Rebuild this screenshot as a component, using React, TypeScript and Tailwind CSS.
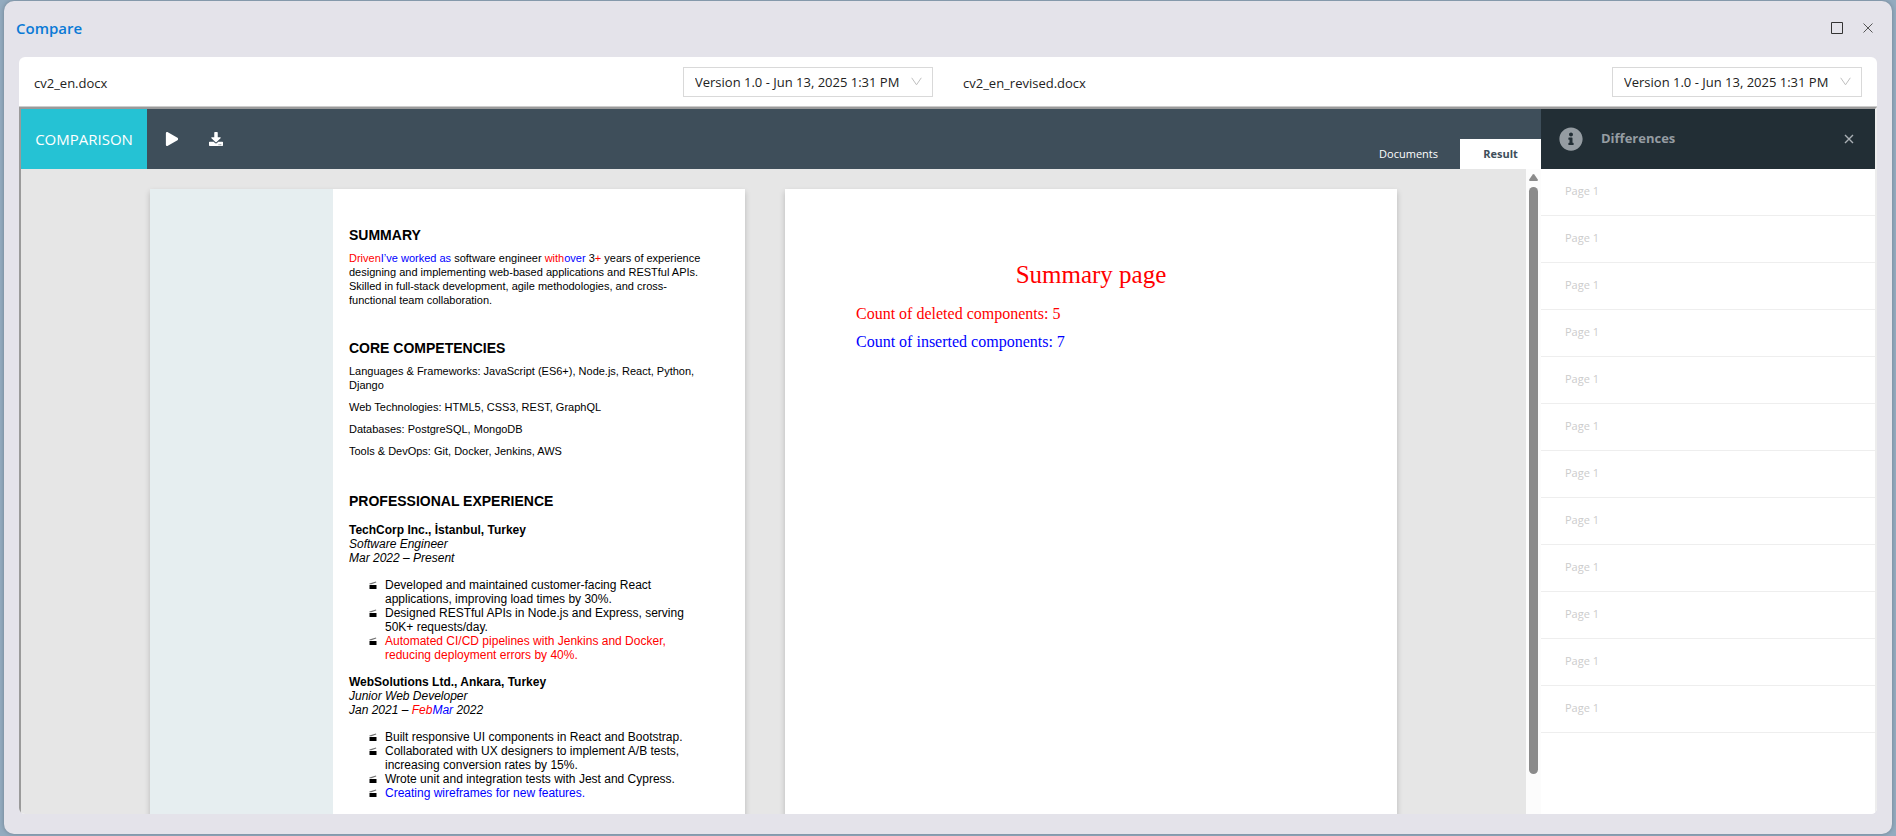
import { useState } from "react";
import type { ReactNode } from "react";
import { FaDownload, FaInfoCircle, FaPlay } from "react-icons/fa";

const VERSION = "Version 1.0 - Jun 13, 2025 1:31 PM";

const differences = Array.from({ length: 12 }, (_, i) => ({ id: i, page: 1 }));

function Del({ children }: { children: ReactNode }) {
  return <del className="no-underline text-[#ff0000]">{children}</del>;
}

function Ins({ children }: { children: ReactNode }) {
  return <ins className="no-underline text-[#0000ff]">{children}</ins>;
}

function FilePicker({ id, name }: { id: string; name: string }) {
  return (
    <div className="flex flex-1 items-center justify-between px-[15px]">
      <label htmlFor={id} className="pt-1">
        {name}
      </label>
      <div className="relative w-[250px]">
        <select
          id={id}
          className="block h-[30px] w-full appearance-none border border-[#d9d9d9] bg-white pl-[11px] pr-8 pt-[2px] outline-none"
        >
          <option>{VERSION}</option>
        </select>
        <svg
          className="pointer-events-none absolute right-[11px] top-[10px] h-[9px] w-[11px]"
          viewBox="0 0 11 9"
          fill="none"
          stroke="#bfbfbf"
        >
          <path d="M0.7 0.8 5.5 7.8 10.3 0.8" />
        </svg>
      </div>
    </div>
  );
}

function Bullet({ children }: { children: ReactNode }) {
  return (
    <li className="flex">
      <svg
        className="mr-2 mt-[3px] h-2 w-2 shrink-0"
        viewBox="0 0 8 8"
        fill="#000"
      >
        <path d="M0.5 4h7v4h-7z" />
        <path d="M0.3 2.6 7 0.4 7.3 1.5 2.4 3.2H0.5z" opacity="0.55" />
      </svg>
      <span>{children}</span>
    </li>
  );
}

function CvPage() {
  return (
    <article className="flex h-[842px] w-[595px] shrink-0 bg-white font-['Liberation_Sans',Arial,sans-serif] text-[12px] leading-[14px] text-black shadow-[0_3px_6px_rgba(0,0,0,0.2)]">
      <div className="w-[183px] shrink-0 bg-[#e6eef0]" />
      <div className="flex-1 pl-4 pr-9 pt-[38px]">
        <h2 className="text-[14px] font-bold leading-4">SUMMARY</h2>
        <p className="mt-2 text-[11px]">
          <Del>Driven</Del>
          <Ins>I’ve worked as</Ins> software engineer <Del>with</Del>
          <Ins>over</Ins> 3<Del>+</Del> years of experience designing and
          implementing web-based applications and RESTful APIs. Skilled in
          full-stack development, agile methodologies, and cross-functional team
          collaboration.
        </p>

        <h2 className="mt-[33px] text-[14px] font-bold leading-4">
          CORE COMPETENCIES
        </h2>
        <div className="mt-2 flex flex-col gap-2 text-[11px]">
          <p>
            Languages &amp; Frameworks: JavaScript (ES6+), Node.js, React,
            Python, Django
          </p>
          <p>Web Technologies: HTML5, CSS3, REST, GraphQL</p>
          <p>Databases: PostgreSQL, MongoDB</p>
          <p>Tools &amp; DevOps: Git, Docker, Jenkins, AWS</p>
        </div>

        <h2 className="mt-[35px] text-[14px] font-bold leading-4">
          PROFESSIONAL EXPERIENCE
        </h2>
        <h3 className="mt-[14px] font-bold">TechCorp Inc., İstanbul, Turkey</h3>
        <p className="italic">Software Engineer</p>
        <p className="italic">Mar 2022 – Present</p>
        <ul className="ml-5 mt-[13px]">
          <Bullet>
            Developed and maintained customer-facing React applications,
            improving load times by 30%.
          </Bullet>
          <Bullet>
            Designed RESTful APIs in Node.js and Express, serving 50K+
            requests/day.
          </Bullet>
          <Bullet>
            <Del>
              Automated CI/CD pipelines with Jenkins and Docker, reducing
              deployment errors by 40%.
            </Del>
          </Bullet>
        </ul>

        <h3 className="mt-[13px] font-bold">
          WebSolutions Ltd., Ankara, Turkey
        </h3>
        <p className="italic">Junior Web Developer</p>
        <p className="italic">
          Jan 2021 – <Del>Feb</Del>
          <Ins>Mar</Ins> 2022
        </p>
        <ul className="ml-5 mt-[13px]">
          <Bullet>Built responsive UI components in React and Bootstrap.</Bullet>
          <Bullet>
            Collaborated with UX designers to implement A/B tests, increasing
            conversion rates by 15%.
          </Bullet>
          <Bullet>Wrote unit and integration tests with Jest and Cypress.</Bullet>
          <Bullet>
            <Ins>Creating wireframes for new features.</Ins>
          </Bullet>
        </ul>
      </div>
    </article>
  );
}

function SummaryPage() {
  return (
    <article className="h-[842px] w-[612px] shrink-0 bg-white px-[71px] pt-[72px] font-['Liberation_Serif','Times_New_Roman',serif] text-[16px] leading-5 shadow-[0_3px_6px_rgba(0,0,0,0.2)]">
      <h2 className="text-center text-[25px] leading-7 text-[#ff0000]">
        Summary page
      </h2>
      <p className="mt-[15px] text-[#ff0000]">Count of deleted components: 5</p>
      <p className="mt-2 text-[#0000ff]">Count of inserted components: 7</p>
    </article>
  );
}

export default function App() {
  const [tab, setTab] = useState<"documents" | "result">("result");

  return (
    <div className="h-screen bg-[#93abbf] pb-[2px] pl-1 pr-1 pt-px font-['Open_Sans',sans-serif] text-[#222]">
      <div className="flex h-full flex-col rounded-[10px] bg-[#e4e3ea] px-[15px] pb-5 shadow-[0_0_4px_rgba(0,0,0,0.25)]">
        <header className="flex h-14 shrink-0 items-center justify-between pb-[2px] pr-1">
          <h1 className="-ml-[3px] text-[15px] font-semibold text-[#0a7ad6]">
            Compare
          </h1>
          <div className="flex items-center gap-5">
            <button type="button" aria-label="Maximize">
              <svg className="h-3 w-3" viewBox="0 0 12 12" fill="none" stroke="#333">
                <path d="M0.5 0.5h11v11h-11z" />
              </svg>
            </button>
            <button type="button" aria-label="Close">
              <svg className="h-[10px] w-[10px]" viewBox="0 0 10 10" stroke="#555">
                <path d="M0.5 0.5 9.5 9.5M9.5 0.5 0.5 9.5" />
              </svg>
            </button>
          </div>
        </header>

        <main className="flex min-h-0 flex-1 flex-col overflow-hidden rounded-[6px] bg-white">
          <div className="flex h-[50px] shrink-0 border-b border-[#ccc] text-[13px]">
            <FilePicker id="left-version" name="cv2_en.docx" />
            <FilePicker id="right-version" name="cv2_en_revised.docx" />
          </div>

          <div className="flex min-h-0 flex-1 border-l-2 border-r-2 border-t-2 border-l-[#9a9a9a] border-r-[#ededed] border-t-[#9a9a9a]">
            <section className="flex min-w-0 flex-1 flex-col">
              <div className="flex h-[60px] shrink-0 bg-[#3e4e5a] text-white">
                <div className="flex w-[126px] items-center justify-center bg-[#25c2d4] text-[15px]">
                  COMPARISON
                </div>
                <button
                  type="button"
                  aria-label="Compare"
                  className="flex w-[50px] items-center justify-center"
                >
                  <FaPlay size={14} />
                </button>
                <button
                  type="button"
                  aria-label="Download"
                  className="flex w-[38px] items-center justify-center"
                >
                  <FaDownload size={14} />
                </button>
                <div className="ml-auto flex items-end text-[11px]">
                  <button
                    type="button"
                    onClick={() => setTab("documents")}
                    className="h-[30px] px-[22px]"
                  >
                    Documents
                  </button>
                  <button
                    type="button"
                    onClick={() => setTab("result")}
                    aria-pressed={tab === "result"}
                    className="h-[30px] w-[81px] bg-white font-bold text-[#3e4e5a]"
                  >
                    Result
                  </button>
                </div>
              </div>

              <div className="flex min-h-0 flex-1">
                <div className="flex min-w-0 flex-1 justify-center gap-10 overflow-hidden bg-[#e6e6e6] pt-5">
                  <CvPage />
                  <SummaryPage />
                </div>
                {/* scroll track */}
                <div className="flex w-[15px] shrink-0 flex-col items-center gap-[6px] bg-[#fcfcfc] pb-10 pt-[5px]">
                  <svg className="h-[7px] w-[9px] shrink-0" viewBox="0 0 9 7" fill="#8b8b8b">
                    <path d="M3.7 0.6a1 1 0 0 1 1.6 0L8.8 5.6Q9.2 7 8 7H1Q-.2 7 .2 5.6z" />
                  </svg>
                  <div className="w-[9px] flex-1 rounded-full bg-[#8b8b8b]" />
                </div>
              </div>
            </section>

            <aside className="w-[334px] shrink-0 bg-white">
              <div className="flex h-[60px] items-center bg-[#222e35] pl-[18px] pr-[21px] text-[#959ca2]">
                <FaInfoCircle size={24} />
                <h2 className="ml-[18px] text-[13px] font-bold">Differences</h2>
                <button type="button" aria-label="Close differences" className="ml-auto">
                  <svg
                    className="h-[10px] w-[10px]"
                    viewBox="0 0 10 10"
                    stroke="#aab0b5"
                    strokeWidth="1.4"
                  >
                    <path d="M1 1 9 9M9 1 1 9" />
                  </svg>
                </button>
              </div>
              <ul className="text-[11px] text-[#ccc]">
                {differences.map((diff) => (
                  <li
                    key={diff.id}
                    className="flex h-[47px] items-center border-b border-[#eee] pb-[2px] pl-6"
                  >
                    Page {diff.page}
                  </li>
                ))}
              </ul>
            </aside>
          </div>
        </main>
      </div>
    </div>
  );
}
